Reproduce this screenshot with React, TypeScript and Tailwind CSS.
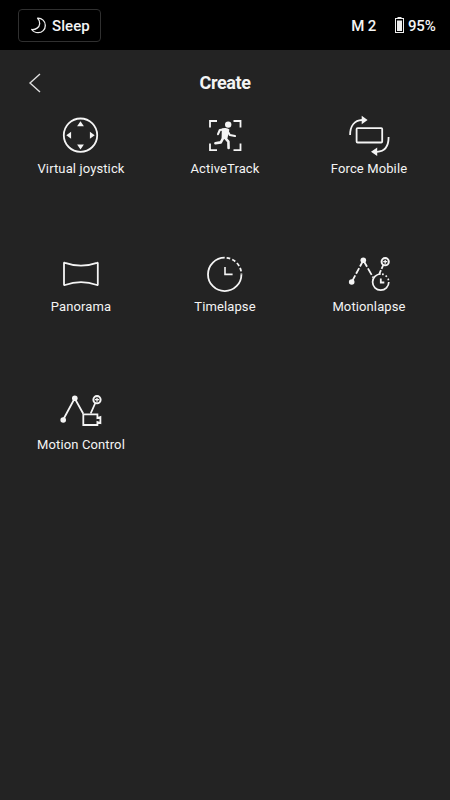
import type { ReactNode } from "react";

function Icon({ children }: { children: ReactNode }) {
  return (
    <svg className="size-12 shrink-0" viewBox="0 0 48 48" fill="none" stroke="#f4f4f4" strokeWidth="1.8">
      {children}
    </svg>
  );
}

const Joystick = () => (
  <Icon>
    <circle cx="23.5" cy="24.2" r="16.7" />
    <path d="M23.5 10.2l3.4 5h-6.8zM23.5 38.4l3.4-5h-6.8zM9.3 24.2l4.8-3.5v7zM37.7 24.2l-4.8-3.5v7z" fill="#f4f4f4" stroke="none" />
  </Icon>
);

const ActiveTrack = () => (
  <Icon>
    <path d="M9 16.5V10h7M32.5 10h7v6.5M9 32.5v6.7h7M32.5 39.2h7V32.5" />
    <circle cx="27.2" cy="13.6" r="3.2" fill="#f4f4f4" stroke="none" />
    <path d="M24 18.4L18.8 19L17 23.2M26 19L28.8 24L34 25" strokeWidth="2.1" strokeLinecap="round" strokeLinejoin="round" />
    <path d="M20.8 17.6Q26 15.8 28.4 18.6L26.4 27.6L20.6 27.4z" fill="#f4f4f4" stroke="none" />
    <path d="M22.2 27L19.8 31.4L14.4 32.3M24 26.8L27.4 30.6L27.6 37" strokeWidth="2.6" strokeLinecap="round" strokeLinejoin="round" />
  </Icon>
);

const ForceMobile = () => (
  <Icon>
    <rect x="11.6" y="17.1" width="25.6" height="14.4" rx="1" />
    <path d="M5.1 24C5.1 15 9.5 9.3 17 9M43.6 26C43.6 35 40 40.5 32 40.8" />
    <path d="M16.7 4.8l5.9 4.2-5.9 4.2zM32.2 36.5v8.6l-6.2-4.3z" fill="#f4f4f4" stroke="none" />
  </Icon>
);

const Panorama = () => (
  <Icon>
    <path d="M7 14.2Q7 13.4 8 13.8Q24 19.4 40 13.8Q40.8 13.4 40.8 14.2V35.6Q40.8 36.4 40 36Q24 30.4 8 36Q7 36.4 7 35.6z" strokeLinejoin="round" />
  </Icon>
);

const Timelapse = () => (
  <Icon>
    <path d="M23.7 8.7A16.7 16.7 0 1 0 40.4 25.4" />
    <path d="M23.7 8.7A16.7 16.7 0 0 1 40.4 25.4" strokeDasharray="3.6 2.2" strokeDashoffset="-2" />
    <path d="M24 18v7.4h7.6" strokeWidth="1.6" />
  </Icon>
);

const Motionlapse = () => (
  <Icon>
    <path d="M6.7 33L18.3 11.3" strokeDasharray="6.5 1.8" strokeDashoffset="-1" />
    <path d="M18.3 11.3L28.2 28.6" strokeDasharray="7.5 1.8" />
    <path d="M38.3 16L34 25.5" strokeDasharray="4.2 1.5" />
    <circle cx="6.7" cy="33" r="2.8" fill="#f4f4f4" stroke="none" />
    <circle cx="18.3" cy="11.3" r="2.8" fill="#f4f4f4" stroke="none" />
    <circle cx="40.2" cy="12.7" r="3.6" strokeWidth="2" />
    <path d="M38.2 12.7h4M40.2 10.7v4" strokeWidth="1.3" />
    <path d="M35.7 25A8.1 8.1 0 1 0 43.8 33.1" strokeWidth="1.7" />
    <path d="M35.7 25A8.1 8.1 0 0 1 43.8 33.1" strokeWidth="1.6" strokeDasharray="1.7 2.1" strokeDashoffset="-1.4" />
    <path d="M35.8 29.6V33.5H39.3" strokeWidth="1.8" />
  </Icon>
);

const MotionControl = () => (
  <Icon>
    <path d="M6 33L17.7 11.3L26.3 26.8M38.3 16L33.7 26.5" />
    <circle cx="6.2" cy="33" r="2.8" fill="#f4f4f4" stroke="none" />
    <circle cx="17.8" cy="11.3" r="2.8" fill="#f4f4f4" stroke="none" />
    <circle cx="40" cy="12.7" r="3.6" strokeWidth="2" />
    <path d="M38 12.7h4M40 10.7v4" strokeWidth="1.3" />
    <path d="M26.3 27.3H40.4V31L43.4 30V36L40.4 35V38H26.3z" />
  </Icon>
);

const modes: { label: string; icon: ReactNode }[] = [
  { label: "Virtual joystick", icon: <Joystick /> },
  { label: "ActiveTrack", icon: <ActiveTrack /> },
  { label: "Force Mobile", icon: <ForceMobile /> },
  { label: "Panorama", icon: <Panorama /> },
  { label: "Timelapse", icon: <Timelapse /> },
  { label: "Motionlapse", icon: <Motionlapse /> },
  { label: "Motion Control", icon: <MotionControl /> },
];

export default function App() {
  return (
    <div className="flex h-[800px] w-[450px] flex-col overflow-hidden bg-[#232323] font-['Roboto',sans-serif] text-[#f4f4f4]">
      <div className="flex h-[50px] shrink-0 items-center bg-black pr-[13px] pl-[18px] text-[15px] font-medium">
        <button className="flex h-[33px] w-[83px] items-center rounded-[4px] border border-[#303030] pl-[11px]">
          <svg className="size-[17px]" viewBox="0 0 17 17" fill="none" stroke="#eeeeee" strokeWidth="1.3" strokeLinejoin="round">
            <path d="M7.6 1.2C12 1 15.3 4.2 15.3 8.4C15.3 12.5 12.2 15.7 8.1 15.7C5.3 15.7 3.1 14.5 1.7 12.5C5.8 12.9 9.4 10.4 9.7 6.7C9.9 4.6 9 2.5 7.6 1.2z" />
          </svg>
          <span className="ml-[5px] pt-[2px] leading-none tracking-[0.1px]">Sleep</span>
        </button>
        <span className="ml-auto mr-[19px] pt-[2px] leading-none tracking-[-0.2px]">M 2</span>
        <svg className="h-4 w-[9px]" viewBox="0 0 9 16" fill="#eeeeee">
          <rect x="2.5" width="4" height="1.5" />
          <rect x="0.5" y="1.5" width="8" height="14" fill="none" stroke="#eeeeee" />
          <rect x="2" y="3.5" width="5" height="10.5" />
        </svg>
        <span className="ml-[4px] w-[29px] whitespace-nowrap pt-[2px] leading-none tracking-[-0.2px]">95%</span>
      </div>
      <header className="grid h-[61px] shrink-0 grid-cols-[1fr_auto_1fr] items-center pt-[4px]">
        <svg className="ml-[28px] h-[20px] w-[14px]" viewBox="0 0 14 20" fill="none" stroke="#dedede" strokeWidth="1.4">
          <path d="M12 1L2 10L12 19" />
        </svg>
        <h1 className="text-[18px] leading-none font-bold tracking-[-0.4px]">Create</h1>
      </header>
      <main className="grid grid-cols-3 px-[9px]">
        {modes.map((mode) => (
          <div key={mode.label} className="flex h-[138px] flex-col items-center">
            {mode.icon}
            <span className="mt-[2px] text-[13px] leading-4 whitespace-nowrap tracking-[0.12px]">{mode.label}</span>
          </div>
        ))}
      </main>
    </div>
  );
}
